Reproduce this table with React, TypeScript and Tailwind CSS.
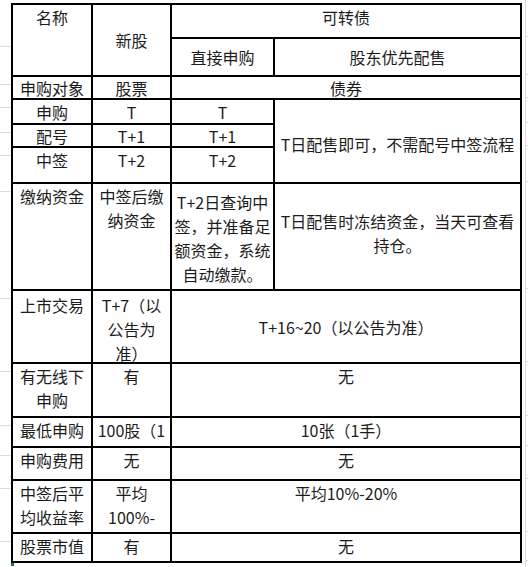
import React from 'react';

// top-aligned spreadsheet cell, text clipped by the cell box
function Cell({ children, className = '' }: { children?: React.ReactNode; className?: string }) {
  return (
    <div className={`bg-white overflow-hidden text-center leading-[24px] whitespace-nowrap ${className}`}>
      {children}
    </div>
  );
}

// vertically centred cell
function Mid({ children, className = '' }: { children?: React.ReactNode; className?: string }) {
  return (
    <div className={`bg-white overflow-hidden text-center leading-[24px] whitespace-nowrap flex flex-col items-center justify-center ${className}`}>
      {children}
    </div>
  );
}

const marginRows = [34, 38, 23, 25, 23, 36, 107, 73, 54, 30, 33, 53, 29];

export default function App() {
  return (
    <div
      className="w-[528px] h-[567px] bg-white overflow-hidden text-[16px] text-[#1c1c1c]"
      style={{ fontFamily: '"Noto Sans CJK SC", "Noto Sans", sans-serif' }}
    >
      <div className="flex">
        {/* spreadsheet margin on the left */}
        <div className="w-[11px] flex flex-col pt-[13px]">
          {marginRows.map((h, i) => (
            <div key={i} className="border-b border-[#dcdcdc]" style={{ height: h }} />
          ))}
        </div>

        <div className="flex flex-col pt-[3px]">
          <div className="grid grid-cols-[78px_77px_101px_245px] grid-rows-[32px_36px_21px_23px_21px_34px_105px_71px_52px_28px_31px_51px_27px] gap-[2px] p-[2px] bg-black w-fit">
            {/* header */}
            <Cell className="row-span-2">名称</Cell>
            <Mid className="row-span-2">新股</Mid>
            <Cell className="col-span-2">可转债</Cell>
            <Mid>直接申购</Mid>
            <Mid>股东优先配售</Mid>

            {/* 申购对象 */}
            <Mid>申购对象</Mid>
            <Mid>股票</Mid>
            <Mid className="col-span-2">债券</Mid>

            {/* 申购 / 配号 / 中签 */}
            <Cell>申购</Cell>
            <Cell>T</Cell>
            <Cell>T</Cell>
            <Mid className="row-span-3 pt-[6px]">T日配售即可，不需配号中签流程</Mid>
            <Mid>配号</Mid>
            <Mid>T+1</Mid>
            <Mid>T+1</Mid>
            <Cell>中签</Cell>
            <Cell>T+2</Cell>
            <Cell>T+2</Cell>

            {/* 缴纳资金 */}
            <Cell>缴纳资金</Cell>
            <Cell>
              中签后缴
              <br />
              纳资金
            </Cell>
            <Mid className="pt-[2px]">
              <span>T+2日查询中</span>
              <span>签，并准备足</span>
              <span>额资金，系统</span>
              <span>自动缴款。</span>
            </Mid>
            <Mid className="pb-[8px]">
              <span>T日配售时冻结资金，当天可查看</span>
              <span>持仓。</span>
            </Mid>

            {/* 上市交易 */}
            <Cell className="pt-[2px]">上市交易</Cell>
            <Cell className="pt-[2px] leading-[23px]">
              T+7（以
              <br />
              公告为
              <br />
              准）
            </Cell>
            <Mid className="col-span-2">T+16~20（以公告为准）</Mid>

            {/* 有无线下申购 */}
            <Cell>
              有无线下
              <br />
              申购
            </Cell>
            <Cell>有</Cell>
            <Cell className="col-span-2">无</Cell>

            {/* 最低申购金额 */}
            <Cell>
              最低申购
              <br />
              金额
            </Cell>
            <Cell>
              100股（1
              <br />
              手）
            </Cell>
            <Cell className="col-span-2">10张（1手）</Cell>

            {/* 申购费用 */}
            <Cell>申购费用</Cell>
            <Cell>无</Cell>
            <Cell className="col-span-2">无</Cell>

            {/* 中签后平均收益率 */}
            <Cell>
              中签后平
              <br />
              均收益率
            </Cell>
            <Cell>
              平均
              <br />
              100%-
            </Cell>
            <Cell className="col-span-2">平均10%-20%</Cell>

            {/* 股票市值要求 */}
            <Cell>
              股票市值
              <br />
              要求
            </Cell>
            <Cell>有</Cell>
            <Cell className="col-span-2">无</Cell>
          </div>
          <div className="w-[3px] h-[3px] bg-[#217346]" />
        </div>

        {/* spreadsheet margin on the right */}
        <div className="w-[3px]" />
        <div className="flex-1 border-l border-[#dcdcdc] flex flex-col pt-[3px]">
          {marginRows.map((h, i) => (
            <div key={i} className="border-b border-[#dcdcdc]" style={{ height: h }} />
          ))}
        </div>
      </div>
    </div>
  );
}
